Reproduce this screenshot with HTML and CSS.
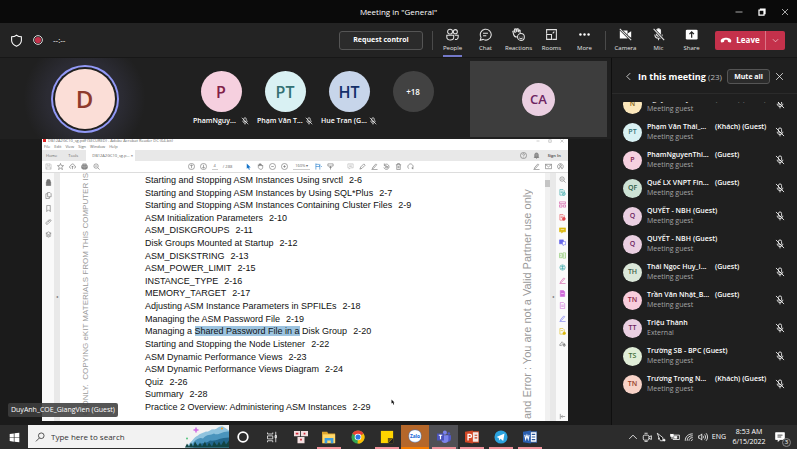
FILE: index.html
```html
<!DOCTYPE html>
<html lang="en">
<head>
  <meta charset="UTF-8">
  <meta name="viewport" content="width=device-width, initial-scale=1.0">
  <title>Meeting in "General"</title>
  <link rel="stylesheet" href="styles.css">
</head>
<body>
  <!-- shared icons -->
  <svg class="sprite" aria-hidden="true">
    <symbol id="mic-off" viewBox="0 0 16 16">
      <rect x="5.5" y="1.5" width="5" height="8" rx="2.5"/>
      <path d="M3.5 7.5c0 6 9 6 9 0M8 12v3M1.500 1.500l13 13"/>
    </symbol>
    <symbol id="close" viewBox="0 0 16 16"><path d="M2 2l12 12M14 2L2 14"/></symbol>
    <symbol id="chev-down" viewBox="0 0 16 16"><path d="M2 5l6 6 6-6"/></symbol>
    <symbol id="zoom-glass" viewBox="0 0 16 16"><circle cx="7" cy="7" r="5"/><path d="M11 11l4 4M4.500 7h5"/></symbol>
    <symbol id="page" viewBox="0 0 16 16"><path d="M3 1h7l3 3v11H3zM5 7h6M5 10h6"/></symbol>
    <symbol id="pen" viewBox="0 0 16 16"><path d="M4 10l7-8 2 2-7 8-3 1zM1 15h14"/></symbol>
  </svg>

  <header class="titlebar">
    <span class="window-title">Meeting in "General"</span>
    <div class="window-buttons">
      <button aria-label="Minimize"><svg viewBox="0 0 16 16"><path d="M1 8h14"/></svg></button>
      <button aria-label="Restore"><svg viewBox="0 0 16 16"><path d="M2 4h10v10H2zM5 4V2h9v9h-2" stroke-width="2.500"/></svg></button>
      <button aria-label="Close"><svg><use href="#close"/></svg></button>
    </div>
  </header>

  <div class="toolbar">
    <div class="status">
      <svg class="icon-13" viewBox="0 0 16 16"><path d="M8 1.500c2 1.500 4 2 6 2v4.500c0 3.500-2.500 5.500-6 7-3.500-1.500-6-3.500-6-7V3.500c2 0 4-.5 6-2z"/></svg>
      <svg class="icon-10" viewBox="0 0 16 16"><circle cx="8" cy="8" r="7"/><circle cx="8" cy="8" r="5" fill="#c4314b" stroke="none"/></svg>
      <span>--:--</span>
    </div>
    <button class="outline-btn request">Request control</button>
    <nav class="tools views">
      <button class="tool active"><svg viewBox="0 0 16 16"><circle cx="5" cy="4.500" r="3"/><circle cx="11.500" cy="4.500" r="2.500"/><path d="M1 9h8.500v2.500c0 4.500-8.500 4.500-8.500 0zM11 9h4v2c0 2.500-2 3.500-4 3"/></svg>People</button>
      <button class="tool"><svg viewBox="0 0 16 16"><path d="M1.500 15l1-3.500A6.700 6.700 0 1 1 5 14zM5 6.500h6M5 9.500h4"/></svg>Chat</button>
      <button class="tool"><svg viewBox="0 0 16 16"><path d="M2 8L1 4l1.500-.5L4 6 3 1.500 4.500 1 6 5V1h1.500l.5 4 1-2.500 1 .5v3M2 8c.5 2 2 3 4 3"/><circle cx="11" cy="11" r="4.200"/><path d="M9.500 10v.5M12.500 10v.5M9 12c1 1.500 3 1.500 4 0"/></svg>Reactions</button>
      <button class="tool"><svg viewBox="0 0 16 16"><path d="M2 7V2h12v12H9M2 8h6v6H2zM9.500 6.500L11.500 4.500"/></svg>Rooms</button>
      <button class="tool"><svg viewBox="0 0 16 16"><g fill="#fff" stroke="none"><circle cx="3" cy="8" r="1.500"/><circle cx="8" cy="8" r="1.500"/><circle cx="13" cy="8" r="1.500"/></g></svg>More</button>
    </nav>
    <nav class="tools devices">
      <button class="tool"><svg viewBox="0 0 16 16"><path d="M1 3h9.500v10H1zM11 6.500L15 4v8l-4-2.500z" fill="#fff" stroke="none"/><path d="M1 1l14 14" stroke="#232323" stroke-width="3"/><path d="M1 1l14 14"/></svg>Camera</button>
      <button class="tool"><svg viewBox="0 0 16 16"><rect x="5.500" y="1" width="5" height="9" rx="2.500" fill="#fff"/><path d="M3.500 8c0 6 9 6 9 0M8 12v3"/><path d="M2 1l13 14" stroke="#232323" stroke-width="3"/><path d="M2 1l13 14"/></svg>Mic</button>
      <button class="tool"><svg viewBox="0 0 16 16"><rect x="1" y="2" width="14.500" height="12" rx="1.500" fill="#fff" stroke="none"/><path d="M8.200 12V5M5.500 7.500L8.200 4.800 11 7.500" stroke="#222" stroke-width="1.500"/></svg>Share</button>
    </nav>
    <div class="leave">
      <button class="leave-main"><svg viewBox="0 0 16 16"><path d="M1 9c0-5.500 14-5.500 14 0 0 2-.5 2.500-1.500 2.200L11 10.500c-.8-.3-.5-2-1-2.500-1-.5-3-.5-4 0-.5.5-.2 2.200-1 2.500l-2.500.7C1.500 11.500 1 11 1 9z" fill="#fff" stroke="none"/></svg>Leave</button>
      <button class="leave-more" aria-label="Leave options"><svg><use href="#chev-down"/></svg></button>
    </div>
  </div>

  <main class="meeting">
    <section class="stage">
      <div class="strip">
        <div class="speaker"><span class="avatar big">D</span></div>
        <div class="tiles">
          <div class="tile"><span class="avatar mid pink">P</span><div class="caption"><span>PhamNguy...</span><svg><use href="#mic-off"/></svg></div></div>
          <div class="tile"><span class="avatar mid aqua">PT</span><div class="caption"><span>Phạm Văn T...</span><svg><use href="#mic-off"/></svg></div></div>
          <div class="tile"><span class="avatar mid blue">HT</span><div class="caption"><span>Hue Tran (G...</span><svg><use href="#mic-off"/></svg></div></div>
          <div class="tile"><span class="avatar mid more">+18</span></div>
        </div>
        <div class="self"><span class="avatar self-avatar lilac">CA</span></div>
      </div>

      <div class="share">
        <div class="reader">
          <div class="reader-title"><span><i></i>DB12A2GC10_sg.pdf (SECURED) - Adobe Acrobat Reader DC (64-bit)</span>
            <span class="reader-window"><svg viewBox="0 0 16 16"><path d="M2 8h12"/></svg><svg viewBox="0 0 16 16"><path d="M3 3h10v10H3z"/></svg><svg><use href="#close"/></svg></span>
          </div>
          <div class="reader-menu"><span>File</span><span>Edit</span><span>View</span><span>Sign</span><span>Window</span><span>Help</span></div>
          <div class="reader-tabs">
            <span class="tab">Home</span><span class="tab">Tools</span><span class="tab current">DB12A2GC10_sg.p... <b>×</b></span>
            <span class="signin"><svg viewBox="0 0 16 16"><circle cx="8" cy="8" r="7"/><path d="M6 6c0-3 4-3 4 0 0 1.500-2 1.500-2 3.500M8 11v1.500"/></svg><svg viewBox="0 0 16 16"><path d="M4 12V6c0-5 8-5 8 0v6zM2 12.500h12M7 15h2" fill="#999"/></svg><b>Sign In</b></span>
          </div>
          <div class="reader-tools">
            <div class="group left">
              <svg viewBox="0 0 16 16" class="faint"><path d="M2 2h10l2 2v10H2zM5 2v4h6V2M4 14V9h8v5"/></svg>
              <svg viewBox="0 0 16 16"><path d="M8 1l2 5h5l-4 3.500 1.500 5.500L8 12l-4.500 3L5 9.500 1 6h5z"/></svg>
              <svg viewBox="0 0 16 16"><path d="M5 12C-1 12 1 6 4 6c1-5 8-5 8 0 4 0 4 6 0 6M8 14V7M5.500 9.500L8 7l2.500 2.500"/></svg>
              <svg viewBox="0 0 16 16"><path d="M4 6V2h8v4M1.500 6h13v6h-13zM4 9h8v5H4z" fill="#bbb"/></svg>
              <svg><use href="#zoom-glass"/></svg>
            </div>
            <div class="group center">
              <svg viewBox="0 0 16 16"><circle cx="8" cy="8" r="7"/><path d="M8 12V4M5 7l3-3 3 3"/></svg>
              <svg viewBox="0 0 16 16"><circle cx="8" cy="8" r="7"/><path d="M8 4v8M5 9l3 3 3-3"/></svg>
              <span class="field">4</span><span>/ 288</span>
              <svg class="gap" viewBox="0 0 16 16"><path d="M4 1l9 9H9l2 5-2 .5L7 11l-3 2z" fill="#1473c8" stroke="none"/></svg>
              <svg viewBox="0 0 16 16"><path d="M3 10V4l2 3V2l2 4V1l2 5V2l2 5 2-2v5c0 6-8 6-10 0z"/></svg>
              <svg viewBox="0 0 16 16"><circle cx="8" cy="8" r="7"/><path d="M5 8h6"/></svg>
              <svg viewBox="0 0 16 16"><circle cx="8" cy="8" r="7"/><path d="M5 8h6M8 5v6"/></svg>
              <span class="field">160% ▾</span>
              <svg viewBox="0 0 16 16" class="accent"><path d="M2 1v14M2 8h9M11 2v13M2 3h6l4 4M14 8h2"/></svg>
              <svg viewBox="0 0 16 16"><path d="M2 2h12v5H2zM8 7v8M5 10h6"/></svg>
              <svg viewBox="0 0 16 16" class="faint gap"><path d="M2 2h12v9H8l-3 3v-3H2zM5 5h6M5 8h6"/></svg>
              <svg viewBox="0 0 16 16"><path d="M2 14l2-5 7-7 3 3-7 7z"/></svg>
              <svg><use href="#pen"/></svg>
              <svg viewBox="0 0 16 16"><path d="M3 5a6 6 0 1 1-1 5M3 1v5h5M6 8h5v3H6z"/></svg>
              <svg viewBox="0 0 16 16"><path d="M2 4h12M4 4v11h8V4M6 4V1h4v3M7 7v5M9 7v5"/></svg>
              <svg viewBox="0 0 16 16"><path d="M4 13C-1 8 4 2 8 2s9 6 4 11M12 9v4h3"/></svg>
            </div>
            <div class="group right">
              <svg><use href="#pen"/></svg>
              <svg viewBox="0 0 16 16"><path d="M1 3h14v10H1zM1 3l7 6 7-6"/></svg>
              <svg viewBox="0 0 16 16"><path d="M5 14a6.500 6.500 0 1 1 7-1M5 14v-3c0-2 6-2 6 0v3"/><circle cx="8" cy="6" r="2"/></svg>
            </div>
          </div>

          <div class="reader-body">
            <div class="rail pages">
              <svg viewBox="0 0 16 16"><path d="M4 7V4c0-4 8-4 8 0v3M3 7h10v8H3z" fill="#777"/></svg>
              <svg viewBox="0 0 16 16"><path d="M6 1h5l3 3v7H6zM6 4H2v11h8v-4"/></svg>
              <svg viewBox="0 0 16 16"><path d="M4 1h8v14l-4-4-4 4z"/></svg>
              <svg viewBox="0 0 16 16"><path d="M6 10l5-5c2-2 4 0 2 2l-6 6c-3 3-7 0-4-3l7-7"/></svg>
              <svg viewBox="0 0 16 16"><path d="M8 2l6 3-6 3-6-3zM2 8l6 3 6-3M2 11l6 3 6-3"/></svg>
            </div>
            <div class="gutter">◂</div>
            <div class="page">
              <div class="watermark left-mark"><span>O ONLY.&nbsp; COPYING eKIT MATERIALS FROM THIS COMPUTER IS</span></div>
              <ul class="contents">
                <li>Starting and Stopping ASM Instances Using srvctl<span>2-6</span></li>
                <li>Starting and Stopping ASM Instances by Using SQL*Plus<span>2-7</span></li>
                <li>Starting and Stopping ASM Instances Containing Cluster Files<span>2-9</span></li>
                <li>ASM Initialization Parameters<span>2-10</span></li>
                <li>ASM_DISKGROUPS<span>2-11</span></li>
                <li>Disk Groups Mounted at Startup<span>2-12</span></li>
                <li>ASM_DISKSTRING<span>2-13</span></li>
                <li>ASM_POWER_LIMIT<span>2-15</span></li>
                <li>INSTANCE_TYPE<span>2-16</span></li>
                <li>MEMORY_TARGET<span>2-17</span></li>
                <li>Adjusting ASM Instance Parameters in SPFILEs<span>2-18</span></li>
                <li>Managing the ASM Password File<span>2-19</span></li>
                <li>Managing a <mark>Shared Password File in a</mark> Disk Group<span>2-20</span></li>
                <li>Starting and Stopping the Node Listener<span>2-22</span></li>
                <li>ASM Dynamic Performance Views<span>2-23</span></li>
                <li>ASM Dynamic Performance Views Diagram<span>2-24</span></li>
                <li>Quiz<span>2-26</span></li>
                <li>Summary<span>2-28</span></li>
                <li>Practice 2 Overview: Administering ASM Instances<span>2-29</span></li>
              </ul>
              <div class="watermark right-mark"><span>and Error : You are not a Valid Partner use only</span></div>
            </div>
            <div class="scrollbar"><i></i></div>
            <div class="gutter">◂</div>
            <div class="rail apps">
              <svg><use href="#zoom-glass"/></svg>
              <svg class="teal" viewBox="0 0 16 16"><path d="M2 1h7l3 3v10H2zM4 5h5M4 8h4"/><circle cx="11" cy="11" r="3.500" fill="#fff"/><path d="M11 9v4M9 11h4"/></svg>
              <svg class="magenta" viewBox="0 0 16 16"><path d="M1 2h14v4H1zM1 9h6v5H1zM10 9h5v5h-5z"/></svg>
              <svg class="red" viewBox="0 0 16 16"><path d="M2 1h7l3 3v10H2zM4 5h5M4 8h4"/><circle cx="11" cy="11" r="3.500" fill="#e34850"/></svg>
              <svg class="yellow" viewBox="0 0 16 16"><path d="M1 2h14v9H9l-3 3v-3H1z" fill="#dcb90e"/><path d="M4 6h8" stroke="#fff"/></svg>
              <svg class="indigo" viewBox="0 0 16 16"><path d="M1 2h9v9H1z" fill="#6767ec"/><path d="M8 6h7v7h-3l-2 2v-2H8z" fill="#fff"/></svg>
              <svg class="green" viewBox="0 0 16 16"><path d="M1 3h6v10H1zM9 2h6v12H9zM3 6v4M11 5v6"/></svg>
              <svg class="teal" viewBox="0 0 16 16"><circle cx="8" cy="8" r="6"/><path d="M4 6h8M4 10h8M8 3v10"/></svg>
              <svg class="magenta"><use href="#pen"/></svg>
              <svg class="purple" viewBox="0 0 16 16"><path d="M3 1h7l3 3v11H3z" fill="#cf68d8"/><path d="M5 8h6" stroke="#fff"/></svg>
              <svg class="purple"><use href="#page"/></svg>
              <svg class="indigo"><use href="#pen"/></svg>
              <svg class="yellow" viewBox="0 0 16 16"><path d="M2 1h7l3 3v10H2zM4 6h5"/><circle cx="12" cy="12" r="3" fill="#dcb90e"/></svg>
              <svg viewBox="0 0 16 16"><path d="M1 12l6-8 3 3-5 6zM9 12l5-2M12 7v7"/><circle cx="12" cy="12" r="2.500"/></svg>
              <svg class="expand" viewBox="0 0 16 16"><path d="M3 2v12M14 8H5M8 5L5 8l3 3"/></svg>
            </div>
          </div>
        </div>
        <svg class="pointer" viewBox="0 0 10 16"><path d="M1 1v11l3-2 2 5 2-1-2-5h3z" fill="#111" stroke="none"/></svg>
        <span class="presenter">DuyAnh_COE_GiangVien (Guest)</span>
      </div>
    </section>

    <aside class="people">
      <div class="people-head">
        <button class="plain" aria-label="Back"><svg viewBox="0 0 16 16"><path d="M11 2L5 8l6 6"/></svg></button>
        <h2>In this meeting <small>(23)</small></h2>
        <button class="outline-btn mute">Mute all</button>
        <button class="plain" aria-label="Close panel"><svg><use href="#close"/></svg></button>
      </div>
      <div class="roster">
        <ul>
          <li><span class="avatar small sand">N</span><div><p><b class="cut">Nguyễn_Huy_L...</b><b>(Khách) (Guest)</b></p><p class="role">Meeting guest</p></div><svg><use href="#mic-off"/></svg></li>
          <li><span class="avatar small aqua">PT</span><div><p><b class="cut">Phạm Văn Thái_...</b><b>(Khách) (Guest)</b></p><p class="role">Meeting guest</p></div><svg><use href="#mic-off"/></svg></li>
          <li><span class="avatar small pink">P</span><div><p><b class="cut">PhamNguyenThi...</b><b>(Guest)</b></p><p class="role">Meeting guest</p></div><svg><use href="#mic-off"/></svg></li>
          <li><span class="avatar small mint">QF</span><div><p><b class="cut">Quế LX VNPT Fin...</b><b>(Guest)</b></p><p class="role">Meeting guest</p></div><svg><use href="#mic-off"/></svg></li>
          <li><span class="avatar small lilac">Q</span><div><p><b>QUYẾT - NBH</b><b>(Guest)</b></p><p class="role">Meeting guest</p></div><svg><use href="#mic-off"/></svg></li>
          <li><span class="avatar small lilac">Q</span><div><p><b>QUYẾT - NBH</b><b>(Guest)</b></p><p class="role">Meeting guest</p></div><svg><use href="#mic-off"/></svg></li>
          <li><span class="avatar small sage">TH</span><div><p><b class="cut">Thái Ngọc Huy_I...</b><b>(Guest)</b></p><p class="role">Meeting guest</p></div><svg><use href="#mic-off"/></svg></li>
          <li><span class="avatar small rose">TN</span><div><p><b class="cut">Trần Văn Nhật_B...</b><b>(Guest)</b></p><p class="role">Meeting guest</p></div><svg><use href="#mic-off"/></svg></li>
          <li><span class="avatar small lilac">TT</span><div><p><b>Triệu Thành</b></p><p class="role">External</p></div><svg><use href="#mic-off"/></svg></li>
          <li><span class="avatar small lime">TS</span><div><p><b>Trường SB - BPC</b><b>(Guest)</b></p><p class="role">Meeting guest</p></div><svg><use href="#mic-off"/></svg></li>
          <li><span class="avatar small peach">TN</span><div><p><b class="cut">Trương Trọng N...</b><b>(Khách) (Guest)</b></p><p class="role">Meeting guest</p></div><svg><use href="#mic-off"/></svg></li>
        </ul>
      </div>
    </aside>
  </main>

  <footer class="taskbar">
    <button class="start" aria-label="Start"><svg viewBox="0 0 16 16"><path d="M1 3l6-1v5.500H1zM8 1.800L15 1v6.500H8zM1 8.500h6V14l-6-1zM8 8.500h7V15l-7-.8z" fill="#fff" stroke="none"/></svg></button>
    <div class="search">
      <svg class="icon-10" viewBox="0 0 16 16"><circle cx="10" cy="6" r="4.500"/><path d="M7 9.500L1.500 15"/></svg>
      <input type="text" placeholder="Type here to search" aria-label="Search">
      <svg class="art" viewBox="0 0 44 22">
        <path d="M0 22C6 18 9 11 13 10c3-3 5-2 8-4 3 1 5-3 8-2 3 0 5-4 9-3l6 4v17z" fill="#8fc3de"/>
        <path d="M5 22c4-7 9-11 13-9 4-5 8-3 11-5 4 3 8-3 15-2v16z" fill="#4a94bd"/>
        <path d="M8 22c8-6 12-3 17-7 6 1 10-3 19-3v10z" fill="#22668c"/>
        <path d="M0 22l2-4 2 3 2-4 2 4 2-5 3 5 2-4 2 4 3-5 2 5 2-4 3 4 2-5 3 4 2-4 2 4 3-5 2 4 3-4v7z" fill="#124443"/>
        <path d="M11 2v5M8.500 4.500h5" stroke="#d069e3" stroke-width="1.500"/>
        <circle cx="37" cy="3" r="1" fill="#f59b23" stroke="none"/><circle cx="2" cy="13" r="1" fill="#53c47d" stroke="none"/>
      </svg>
    </div>
    <div class="apps-row">
      <button aria-label="Cortana"><svg viewBox="0 0 16 16"><circle cx="8" cy="8" r="5.500" stroke-width="2"/></svg></button>
      <button class="thin" aria-label="Task view"><svg viewBox="0 0 16 16"><path d="M2 2v2h7V2M2 6.500h7v4H2zM2 15v-2h7v2M13 1v14M12 6h2v3h-2z"/></svg></button>
      <button aria-label="UniKey"><svg viewBox="0 0 16 16"><path d="M0 1h7v6H0zM8 1h8v6H8zM4 8h8v7H4z" fill="#f3dfe0" stroke="none"/><path d="M2 4h3M11 4h2M7 11h2" stroke="#d02f3c" stroke-width="2"/></svg></button>
      <button class="open" aria-label="File Explorer"><svg viewBox="0 0 16 16"><path d="M0 2h6l1 2h8v11H0z" fill="#dda52d" stroke="none"/><path d="M1 5h14v10H1z" fill="#ffd86b" stroke="none"/><path d="M3 9h10v6h-3v-3H6v3H3z" fill="#3f9fe0" stroke="none"/></svg></button>
      <button aria-label="Chrome"><svg viewBox="0 0 16 16"><g stroke="none"><circle cx="8" cy="8" r="7.500" fill="#34a853"/><path d="M8 8L1.500 4.200A7.500 7.500 0 0 1 14.500 4.200z" fill="#ea4335"/><path d="M8 8l6.500-3.800A7.500 7.500 0 0 1 7.500 15.500z" fill="#fbbc05"/><circle cx="8" cy="8" r="3.800" fill="#fff"/><circle cx="8" cy="8" r="2.900" fill="#2a78e4"/></g></svg></button>
      <button class="open" aria-label="Sticky Notes"><svg viewBox="0 0 16 16"><path d="M1 1h14v14H1z" fill="#ffd500" stroke="none"/><path d="M15 9v6H9z" fill="#222" stroke="none"/><path d="M9 9h6l-6 6z" fill="#6b5a14" stroke="none"/></svg></button>
      <button class="alert" aria-label="Zalo"><svg viewBox="0 0 32 32"><rect x="2" y="2" width="28" height="28" rx="12" fill="#fff" stroke="#2b7de9" stroke-width="1"/><text x="16" y="20" text-anchor="middle">Zalo</text></svg></button>
      <button class="open focused" aria-label="Teams"><svg viewBox="0 0 16 16"><g stroke="none"><circle cx="9" cy="3" r="2.300" fill="#7b83eb"/><circle cx="13.500" cy="4" r="1.500" fill="#5059c9"/><path d="M10 6h6v4c0 3-3 4-4 3z" fill="#5059c9"/><path d="M5 6h8v5c0 5-8 5-8 0z" fill="#7b83eb"/><path d="M0 4h8v8H0z" fill="#4b53bc"/></g><path d="M2 6h4M4 6v4.500" stroke-width="1.300"/></svg></button>
      <button class="open" aria-label="PowerPoint"><svg viewBox="0 0 16 16"><path d="M7 2h9v12H7z" fill="#f4e9e6" stroke="#c43e1c"/><path d="M11 6h3M11 9h3" stroke="#c43e1c"/><path d="M0 2l9-1.500v15L0 14z" fill="#d24726" stroke="none"/><path d="M3.500 12V5h2c2.500 0 2.500 3.500 0 3.500h-2" stroke-width="1.500"/></svg></button>
      <button class="open" aria-label="Telegram"><svg viewBox="0 0 16 16"><circle cx="8" cy="8" r="7.500" fill="#2ba2de" stroke="none"/><path d="M3 8l9-4-1.500 8.500L7.500 10 6 12l-.5-3z" fill="#fff" stroke="none"/></svg></button>
      <button class="open" aria-label="Word"><svg viewBox="0 0 16 16"><path d="M7 2h9v12H7z" fill="#fff" stroke="#2b579a"/><path d="M10 5h4M10 8h4M10 11h4" stroke="#2b579a"/><path d="M0 2l9-1.500v15L0 14z" fill="#2b5fb0" stroke="none"/><path d="M2 5.500l1 5L4.500 6 6 10.500l1-5" stroke-width="1.200"/></svg></button>
    </div>
    <div class="tray">
      <svg viewBox="0 0 16 16"><path d="M2 11l6-6 6 6"/></svg>
      <svg viewBox="0 0 16 16"><rect x="2" y="5" width="9" height="8" rx="2"/><path d="M11 8l4-2v6l-4-2M4 2h5M4 15h5"/></svg>
      <svg viewBox="0 0 16 16"><path d="M2 2l9 7v5H7zM4 9v3" fill="#111"/><circle cx="13" cy="13" r="1.500" fill="#fff"/></svg>
      <svg viewBox="0 0 16 16"><path d="M5 5h10v7H5z"/><path d="M1 3v4h4V3M3 7v4M7 7h4v3H7z" fill="#fff"/></svg>
      <svg viewBox="0 0 16 16"><path d="M2 14C2 7 7 3 14 3M5 14c0-5 3-8 9-8M8 14c0-3 2-5 6-5M11 14l3-2"/></svg>
      <svg viewBox="0 0 16 16"><path d="M1 6h2l3-3v10l-3-3H1zM8 6c1 1 1 3 0 4M10.500 4c2 2 2 6 0 8M13 2c3 3 3 9 0 12"/></svg>
      <span>ENG</span>
      <div class="clock"><span>8:53 AM</span><span>6/15/2022</span></div>
      <button class="notices" aria-label="Notifications"><svg viewBox="0 0 16 16"><path d="M1 1h14v11H8l-3 3v-3H1z" fill="#fff"/><path d="M4 5h8M4 8h6" stroke="#222"/></svg><span class="count">3</span></button>
    </div>
  </footer>
</body>
</html>
```
FILE: styles.css
```css
* {
  box-sizing: border-box;
}
body {
  margin: 0;
  height: 100vh;
  display: flex;
  flex-direction: column;
  overflow: hidden;
  background: #1b1b1b;
  color: #fff;
  font-family: "Open Sans", "Noto Sans", sans-serif;
  font-size: 7px;
  line-height: 10px;
}
.sprite {
  display: none;
}
svg {
  flex: none;
  fill: none;
  stroke: currentColor;
  stroke-width: 1.3;
}
button {
  font: inherit;
  color: inherit;
  padding: 0;
  border: none;
  background: none;
  display: flex;
  align-items: center;
  justify-content: center;
}
ul, p, h2 {
  margin: 0;
  padding: 0;
  list-style: none;
}
.icon-13 {
  width: 13px;
  height: 13px;
}
.icon-10 {
  width: 10px;
  height: 10px;
}

/* window title */
.titlebar {
  flex: none;
  height: 23px;
  background: #0a0a0a;
  display: grid;
  grid-template-columns: 1fr auto 1fr;
  align-items: center;
}
.window-title {
  grid-column: 2;
  font-size: 8px;
}
.window-buttons {
  display: flex;
  justify-content: flex-end;
  gap: 15px;
  padding-right: 8px;
}
.window-buttons svg {
  width: 8px;
  height: 8px;
}

/* call toolbar */
.toolbar {
  flex: none;
  height: 35px;
  display: flex;
  align-items: center;
  padding: 0 12px 0 10px;
  background: #232323;
  border-bottom: 1px solid #171717;
}
.status {
  display: flex;
  align-items: center;
  gap: 10px;
  flex: 1;
  font-size: 8px;
}
.outline-btn {
  height: 19px;
  border: 1px solid #555;
  border-radius: 3px;
  background: #2b2b2b;
  font-weight: 700;
}
.request {
  width: 84px;
  margin-right: 9px;
}
.tools {
  display: flex;
  height: 34px;
  align-items: center;
  padding-left: 4px;
  background: linear-gradient(#4a4a4a, #4a4a4a) left center / 1px 19px no-repeat;
}
.views {
  padding-right: 4px;
}
.tool {
  width: 33px;
  height: 34px;
  flex-direction: column;
  gap: 2px;
  padding-top: 2px;
  font-size: 6px;
  border-bottom: 2px solid transparent;
  color: #e3e3e3;
}
.tool svg {
  width: 13px;
  height: 13px;
}
.tool.active {
  background: linear-gradient(#7378c8, #7378c8) center 32px / 19px 2px no-repeat;
  background-origin: border-box;
  background-clip: border-box;
}
.leave {
  display: flex;
  height: 19px;
  margin-left: 7px;
  border-radius: 2px;
  background: #c4314b;
  font-size: 8px;
  font-weight: 700;
}
.leave-main {
  width: 51px;
  gap: 4px;
  border-right: 1px solid #da7486;
}
.leave-main svg {
  width: 12px;
  height: 12px;
}
.leave-more {
  width: 19px;
}
.leave-more svg {
  width: 7px;
  height: 7px;
}

/* stage */
.meeting {
  flex: 1;
  min-height: 0;
  display: flex;
}
.stage {
  flex: 1;
  min-width: 0;
  display: flex;
  flex-direction: column;
}
.strip {
  flex: none;
  height: 81px;
  display: flex;
  background: #202020;
}
.avatar {
  flex: none;
  display: flex;
  align-items: center;
  justify-content: center;
  border-radius: 50%;
  font-weight: 600;
}
.speaker {
  width: 169px;
  display: flex;
  align-items: center;
  justify-content: center;
  background: radial-gradient(circle, #2b2b33 40%, #202020 65%);
}
.big {
  width: 60px;
  height: 60px;
  font-size: 24px;
  background: #fbded7;
  color: #8e3a2c;
  box-shadow: 0 0 0 2px #202020, 0 0 0 4px #9299f7;
}
.tiles {
  flex: 1;
  display: flex;
  padding: 13px 0 0 20px;
}
.tile {
  width: 64px;
  display: flex;
  flex-direction: column;
  align-items: center;
  gap: 4px;
}
.mid {
  width: 41px;
  height: 41px;
  font-size: 16px;
}
.more {
  background: #424242;
  font-size: 8px;
}
.caption {
  width: 56px;
  display: flex;
  align-items: center;
  justify-content: space-between;
  white-space: nowrap;
  font-weight: 600;
}
.caption svg {
  width: 8px;
  height: 8px;
}
.self {
  width: 137px;
  margin: 3px 4px 2px 0;
  display: flex;
  align-items: center;
  justify-content: center;
  background: #3d3d3d;
}
.self-avatar {
  width: 33px;
  height: 33px;
  font-size: 13px;
}
.pink { background: #f6d0df; color: #812147; }
.aqua { background: #d9f1f3; color: #347173; }
.blue { background: #c7d5ea; color: #14306a; }
.lilac { background: #eacfe1; color: #6d2461; }
.sand { background: #fbe7bb; color: #8b6720; }
.mint { background: #cde2d5; color: #2c5c47; }
.sage { background: #dbe7d9; color: #3e604b; }
.rose { background: #f8cddc; color: #8c2849; }
.lime { background: #e0edd7; color: #456d36; }
.peach { background: #f8d3c8; color: #97402a; }

/* shared screen */
.share {
  flex: 1;
  min-height: 0;
  position: relative;
  display: flex;
  padding: 0 43px 4px 42px;
}
.reader {
  flex: 1;
  min-width: 0;
  display: flex;
  flex-direction: column;
  background: #fff;
  color: #666;
  font-size: 4px;
  line-height: 6px;
}
.reader svg {
  width: 7px;
  height: 7px;
}
.reader-title {
  height: 4px;
  display: flex;
  align-items: center;
  justify-content: space-between;
  overflow: hidden;
  padding: 0 4px 0 1px;
}
.reader-title i {
  display: inline-block;
  width: 3px;
  height: 3px;
  margin-right: 2px;
  background: #d22;
}
.reader-window {
  display: flex;
  gap: 8px;
}
.reader .reader-window svg {
  width: 4px;
  height: 4px;
}
.reader-menu {
  height: 7px;
  display: flex;
  align-items: center;
  gap: 4px;
  padding-left: 2px;
}
.reader-tabs {
  height: 11px;
  display: flex;
  align-items: stretch;
  background: #e8e8e8;
  line-height: 11px;
}
.tab {
  padding: 0 5px 0 4px;
}
.tab + .tab {
  padding-left: 6px;
}
.tab.current {
  width: 49px;
  margin-left: 3px;
  background: #fff;
  white-space: nowrap;
}
.signin {
  margin-left: auto;
  padding-right: 7px;
  display: flex;
  align-items: center;
  gap: 6px;
}
.signin b {
  margin-left: 2px;
}
.reader-tools {
  height: 12px;
  display: flex;
  align-items: center;
  justify-content: space-between;
  padding: 0 4px 0 3px;
  border-bottom: 1px solid #ddd;
}
.group {
  display: flex;
  align-items: center;
  gap: 5px;
  white-space: nowrap;
}
.left {
  width: 93px;
}
.right {
  width: 100px;
  justify-content: flex-end;
}
.field {
  padding: 0 2px;
  border-bottom: 1px solid #ccc;
}
.faint {
  opacity: 0.5;
}
.accent {
  color: #1473c8;
}
.gap {
  margin-left: 8px;
}
.reader-body {
  flex: 1;
  min-height: 0;
  display: flex;
}
.rail {
  width: 12px;
  display: flex;
  flex-direction: column;
  align-items: center;
  background: #fafafa;
}
.pages {
  padding-top: 6px;
  gap: 6px;
}
.apps {
  justify-content: space-between;
  padding: 3px 0 1px;
}
.apps .expand {
  margin-top: 60px;
}
.teal { color: #26a0a2; }
.magenta { color: #d0479b; }
.red { color: #e34850; }
.yellow { color: #dcb90e; }
.indigo { color: #6767ec; }
.green { color: #7cc35a; }
.purple { color: #cf68d8; }
.gutter {
  width: 6px;
  display: flex;
  align-items: center;
  justify-content: center;
  background: #e9e9e9;
}
.page {
  flex: 1;
  min-width: 0;
  display: flex;
  overflow: hidden;
}
.watermark {
  flex: none;
  display: flex;
  overflow: hidden;
  color: #9a9a9a;
  font-family: "Liberation Sans", Arial, sans-serif;
  white-space: nowrap;
  writing-mode: vertical-rl;
  transform: rotate(180deg);
}
.left-mark {
  width: 12px;
  margin-left: 20px;
  font-size: 8px;
  line-height: 12px;
  justify-content: flex-end;
}
.right-mark {
  width: 12px;
  margin-right: 12px;
  padding-bottom: 16px;
  font-size: 11px;
  line-height: 12px;
  justify-content: flex-end;
}
.contents {
  flex: 1;
  min-width: 0;
  display: flex;
  flex-direction: column;
  justify-content: space-between;
  padding: 1px 0 8px 53px;
  color: #111;
  font-family: "Liberation Sans", Arial, sans-serif;
  font-size: 9px;
  line-height: 12px;
  white-space: nowrap;
}
.contents span {
  margin-left: 6px;
}
mark {
  background: #9cc3df;
  color: inherit;
}
.scrollbar {
  width: 5px;
  padding-top: 7px;
  background: #f1f1f1;
}
.scrollbar i {
  display: block;
  height: 7px;
  background: #c5c5c5;
}
.pointer {
  position: absolute;
  left: 391px;
  bottom: 20px;
  width: 4px;
  height: 6px;
}
.presenter {
  position: absolute;
  left: 8px;
  bottom: 8px;
  padding: 2px 3px;
  border-radius: 2px;
  background: rgba(62, 62, 62, 0.88);
}

/* people panel */
.people {
  width: 186px;
  display: flex;
  flex-direction: column;
  background: #1f1f1f;
  border-left: 1px solid #0f0f0f;
}
.people-head {
  flex: none;
  height: 36px;
  display: flex;
  align-items: center;
  padding: 2px 13px 0 12px;
  border-bottom: 1px solid #2b2b2b;
}
.people-head h2 {
  flex: 1;
  margin-left: 5px;
  font-size: 9px;
  font-weight: 700;
  white-space: nowrap;
}
.people-head small {
  font-size: 8px;
  font-weight: 400;
  color: #bbb;
}
.mute {
  width: 43px;
  height: 15px;
  margin-right: 5px;
}
.plain svg {
  width: 9px;
  height: 9px;
}
.roster {
  flex: 1;
  min-height: 0;
  margin-top: 8px;
  overflow: hidden;
}
.roster ul {
  margin-top: -12px;
}
.roster li {
  height: 28px;
  display: flex;
  align-items: center;
  gap: 5px;
  padding: 0 12px 0 11px;
}
.roster li div {
  flex: 1;
}
.roster p {
  display: flex;
  gap: 2px;
  white-space: nowrap;
}
.roster b {
  font-weight: 600;
}
.cut {
  width: 66px;
}
.roster .role {
  color: #a5a5a5;
}
.roster li svg {
  width: 10px;
  height: 10px;
}
.small {
  width: 19px;
  height: 19px;
}

/* taskbar */
.taskbar {
  flex: none;
  height: 24px;
  display: flex;
  background: #2c2c2c;
}
.start {
  width: 28px;
}
.start svg {
  width: 11px;
  height: 11px;
}
.search {
  width: 201px;
  height: 23px;
  display: flex;
  align-items: center;
  gap: 6px;
  padding-left: 7px;
  background: #f2f2f2;
  color: #333;
}
.search input {
  flex: 1;
  min-width: 0;
  padding: 0;
  border: none;
  background: none;
  font: inherit;
  font-size: 8px;
}
.search input::placeholder {
  color: #333;
}
.art {
  width: 44px;
  height: 23px;
  stroke: none;
}
.apps-row {
  width: 315px;
  display: flex;
}
.apps-row button {
  flex: 1;
}
.apps-row svg {
  width: 14px;
  height: 14px;
}
.apps-row .thin svg {
  width: 12px;
  height: 12px;
  stroke-width: 1;
}
.open {
  background: linear-gradient(#f0929a, #f0929a) center bottom / 24px 2px no-repeat;
}
.focused {
  background-color: #505055;
}
.apps-row .alert {
  background: #b5672a;
  border-bottom: 2px solid #f57c00;
}
.alert text {
  fill: #1565d8;
  stroke: none;
  font-size: 11px;
  font-weight: 700;
}
.tray {
  flex: 1;
  display: flex;
  align-items: center;
  justify-content: flex-end;
  gap: 4px;
  padding-right: 9px;
}
.tray svg {
  width: 10px;
  height: 10px;
}
.clock {
  width: 38px;
  display: flex;
  flex-direction: column;
  align-items: center;
}
.notices {
  position: relative;
  width: 16px;
  height: 16px;
}
.count {
  position: absolute;
  right: -3px;
  bottom: -2px;
  width: 9px;
  height: 9px;
  border: 1px solid #888;
  border-radius: 50%;
  background: #333;
  font-size: 6px;
  line-height: 7px;
}
```
